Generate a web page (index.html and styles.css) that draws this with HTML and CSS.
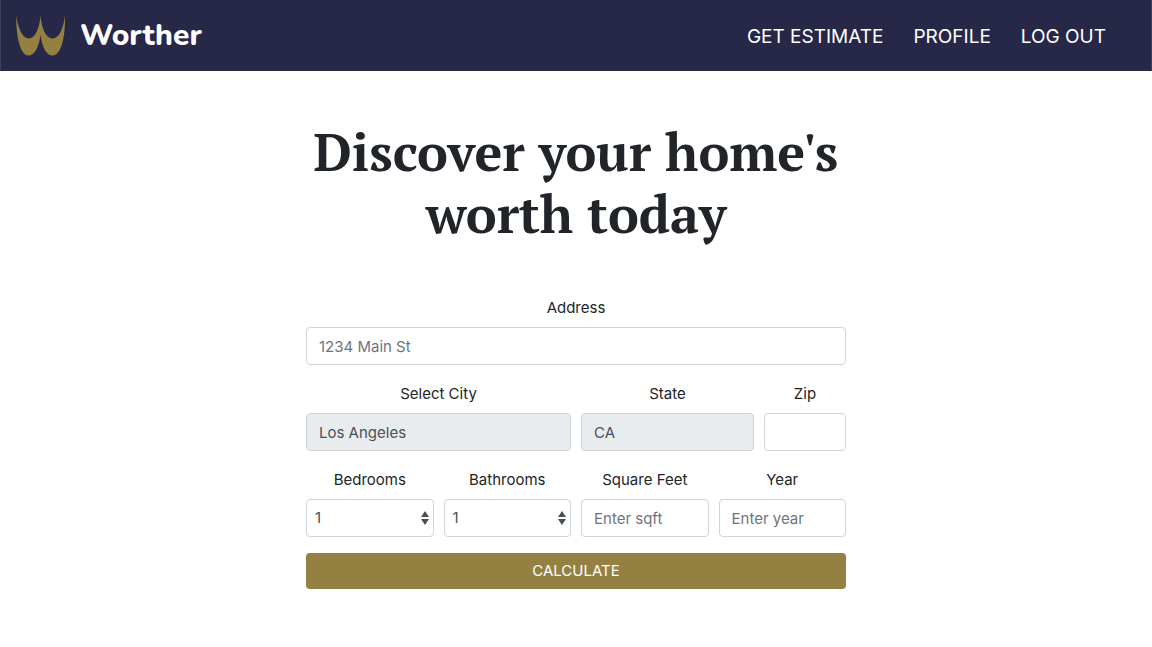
FILE: index.html
```html
<!DOCTYPE html>
<html lang="en">
<head>
<meta charset="utf-8">
<meta name="viewport" content="width=device-width, initial-scale=1">
<title>Worther</title>
<link rel="stylesheet" href="styles.css">
</head>
<body>
<header class="navbar">
  <a class="brand" href="#">
    <svg class="brand-logo" viewBox="0 0 50 40" aria-hidden="true">
      <path d="M0.2 0C2 12 6 23 13 23C19.500 23 23.500 12 24.500 0C25.500 12 29.500 23 36.500 23C43.500 23 47.500 12 49 0C49.500 22 45 40 36.500 40C30.500 40 26 32 24.500 19C23 32 18.500 40 12.500 40C4.500 40 0 22 0.200 0Z"/>
    </svg>
    <span class="brand-name">Worther</span>
  </a>
  <nav class="nav-links">
    <a class="nav-link" href="#">GET ESTIMATE</a>
    <a class="nav-link" href="#">PROFILE</a>
    <a class="nav-link" href="#">LOG OUT</a>
  </nav>
</header>
<main class="estimate">
  <h1 class="title">Discover your home's worth today</h1>
  <form class="form">
    <div class="field">
      <label for="address">Address</label>
      <input class="control" id="address" type="text" placeholder="1234 Main St">
    </div>
    <div class="row row-place">
      <div class="field">
        <label for="city">Select City</label>
        <input class="control" id="city" type="text" value="Los Angeles" readonly>
      </div>
      <div class="field">
        <label for="state">State</label>
        <input class="control" id="state" type="text" value="CA" readonly>
      </div>
      <div class="field">
        <label for="zip">Zip</label>
        <input class="control" id="zip" type="text">
      </div>
    </div>
    <div class="row row-details">
      <div class="field">
        <label for="bedrooms">Bedrooms</label>
        <select class="control select" id="bedrooms"><option>1</option><option>2</option><option>3</option><option>4</option></select>
      </div>
      <div class="field">
        <label for="bathrooms">Bathrooms</label>
        <select class="control select" id="bathrooms"><option>1</option><option>2</option><option>3</option><option>4</option></select>
      </div>
      <div class="field">
        <label for="sqft">Square Feet</label>
        <input class="control" id="sqft" type="text" placeholder="Enter sqft">
      </div>
      <div class="field">
        <label for="year">Year</label>
        <input class="control" id="year" type="text" placeholder="Enter year">
      </div>
    </div>
    <button class="submit" type="submit">CALCULATE</button>
  </form>
</main>
</body>
</html>
```
FILE: styles.css
```css
*,
*::before,
*::after {
  box-sizing: border-box;
}

body {
  margin: 0;
  background: #fff;
  color: #212529;
  font-family: Inter, Roboto, sans-serif;
  font-size: 15px;
  line-height: 24px;
}

.navbar {
  display: flex;
  align-items: center;
  justify-content: space-between;
  padding: 15px 45px 15px 15px;
  border: solid #40405e;
  border-width: 0 1px;
  background: #272748;
}

.brand {
  display: flex;
  align-items: center;
  gap: 14px;
  color: #fff;
  text-decoration: none;
}

.brand-logo {
  width: 50px;
  height: 41px;
  fill: #948040;
}

.brand-name {
  font-family: Nunito, Lato, sans-serif;
  font-size: 30px;
  font-weight: 800;
  line-height: 40px;
}

.nav-links {
  display: flex;
  gap: 30px;
  padding-top: 2px;
}

.nav-link {
  color: #fff;
  font-size: 19px;
  line-height: 30px;
  text-decoration: none;
}

.estimate {
  max-width: 540px;
  margin: 0 auto;
  padding: 50px 0 48px;
  text-align: center;
}

.title {
  margin: 0 0 51px;
  font-family: "PT Serif", "Liberation Serif", serif;
  font-size: 52px;
  font-weight: 700;
  line-height: 62px;
}

.field {
  min-width: 0;
  margin-bottom: 17px;
}

.field label {
  display: block;
  margin-bottom: 7px;
}

.row {
  display: grid;
  gap: 10px;
}

.row-place {
  grid-template-columns: 265fr 173fr 82fr;
}

.row-details {
  grid-template-columns: repeat(4, 1fr);
}

.control {
  display: block;
  width: 100%;
  height: 38px;
  padding: 6px 12px;
  border: 1px solid #ced4da;
  border-radius: 4px;
  background: #fff;
  color: #495057;
  font: inherit;
}

.control::placeholder {
  color: #6c757d;
  opacity: 1;
}

.control:read-only:not(.select) {
  background: #e9ecef;
}

.select {
  appearance: none;
  padding: 6px 24px 6px 8px;
  background: #fff url("data:image/svg+xml,%3Csvg xmlns='http://www.w3.org/2000/svg' viewBox='0 0 8 16'%3E%3Cpath fill='%23495057' d='M4 1L0 7h8zM4 15L0 9h8z'/%3E%3C/svg%3E") no-repeat right 4px center / 8px 16px;
}

.row-details .field {
  margin-bottom: 16px;
}

.submit {
  display: block;
  width: 100%;
  padding: 6px 12px;
  border: 0;
  border-radius: 4px;
  background: #948040;
  color: #fff;
  font: inherit;
}
```
